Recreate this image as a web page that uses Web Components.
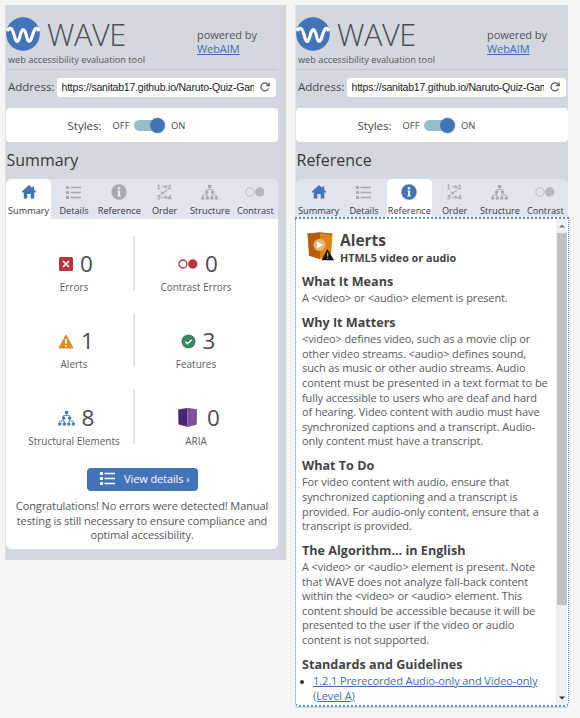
<!DOCTYPE html>
<html lang="en">
<head>
<meta charset="utf-8">
<title>WAVE</title>
<style>
html,body{margin:0;height:718px;overflow:hidden;background:#f5f5f5}
body{font-family:"Open Sans","Noto Sans",sans-serif;color:#454548}
main{display:flex;align-items:flex-start;gap:10px;padding:5px 0 0 6px;width:574px;box-sizing:border-box}
</style>
</head>
<body>
<main>
<wave-panel heading="Summary" tab="0" style="--w:280px;--h:555px">
<wave-summary>
<wave-count icon="error" n="0" label="Errors"></wave-count>
<wave-count icon="contrast" n="0" label="Contrast Errors"></wave-count>
<wave-count icon="alert" n="1" label="Alerts"></wave-count>
<wave-count icon="feature" n="3" label="Features"></wave-count>
<wave-count icon="structure" n="8" label="Structural Elements"></wave-count>
<wave-count icon="aria" n="0" label="ARIA"></wave-count>
</wave-summary>
</wave-panel>
<wave-panel heading="Reference" tab="2" style="--w:272px;--h:703px">
<wave-reference>
<wave-section heading="What It Means">A &lt;video&gt; or &lt;audio&gt; element is present.</wave-section>
<wave-section heading="Why It Matters">&lt;video&gt; defines video, such as a movie clip or<br>other video streams. &lt;audio&gt; defines sound,<br>such as music or other audio streams. Audio<br>content must be presented in a text format to be<br>fully accessible to users who are deaf and hard<br>of hearing. Video content with audio must have<br>synchronized captions and a transcript. Audio-<br>only content must have a transcript.</wave-section>
<wave-section heading="What To Do">For video content with audio, ensure that<br>synchronized captioning and a transcript is<br>provided. For audio-only content, ensure that a<br>transcript is provided.</wave-section>
<wave-section heading="The Algorithm... in English">A &lt;video&gt; or &lt;audio&gt; element is present. Note<br>that WAVE does not analyze fall-back content<br>within the &lt;video&gt; or &lt;audio&gt; element. This<br>content should be accessible because it will be<br>presented to the user if the video or audio<br>content is not supported.</wave-section>
<wave-section heading="Standards and Guidelines"><wave-guideline>1.2.1 Prerecorded Audio-only and Video-only<br>(Level A)</wave-guideline></wave-section>
</wave-reference>
</wave-panel>
</main>
<script>
const ICONS = {
  home:`<svg width="16" height="14" viewBox="0 0 16 14"><path fill="#4474b8" d="M8 0 .6 6.700l.8 1L2.700 7v6.500h3.600V9h3.400v4.500h3.600V7l1.300.7.8-1-2.200-2V1.500h-1.900v1.400z"/></svg>`,
  list:`<svg width="15" height="13" viewBox="0 0 15 13"><g fill="currentColor"><rect width="3" height="3" rx=".5"/><rect y="5" width="3" height="3" rx=".5"/><rect y="10" width="3" height="3" rx=".5"/><path d="M4.500.7H15v1.600H4.500zM4.500 5.700H15v1.600H4.500zM4.500 10.700H15v1.600H4.500z"/></g></svg>`,
  info:`<svg width="16" height="16" viewBox="0 0 16 16"><circle cx="8" cy="8" r="7.700" fill="currentColor"/><circle cx="8" cy="4.300" r="1.200" fill="#edf0f6"/><path d="M6.400 6.500h2.700v5h.8v1H6.300v-1H7v-4h-.6z" fill="#edf0f6"/></svg>`,
  order:`<svg width="15" height="16" viewBox="0 0 15 16"><g fill="none" stroke="currentColor" stroke-width="1.100"><path d="M.5 1.800 1.700.9v3.800M.3 4.700h2.900M5 2.800h4.700M8.200 1.300 9.800 2.800 8.200 4.300M11 1.600Q13.500.1 13.500 2L11.200 4.700h3M10 6.300 4.700 9.600M4.500 7.400v2.400h2.600M.4 11.500h2.500L1.500 12.800q1.800 0 1.500 1.300T.3 14.800M5 13.200h4.700M8.200 11.700l1.600 1.500-1.600 1.500M13.300 15.500v-4.200L11 14.200h3.600"/></g></svg>`,
  structure:`<svg width="17" height="15" viewBox="0 0 17 15"><g fill="currentColor"><path d="M7 0h3.200v3H7zM4 5.700h3.200v2.800H4zM10 5.700h3.200v2.800H10zM.3 11.700h3v2.700h-3zM4.900 11.700h3v2.700h-3zM9.300 11.700h3v2.700h-3zM13.800 11.700h3v2.700h-3z"/></g><path d="M8.600 3v1.500M5.500 6V4.500h6.200V6M5.500 8.500V10M1.800 12v-2h4.600v2M11.700 8.500V10M10.800 12v-2h4.500v2" fill="none" stroke="currentColor" stroke-width=".8"/></svg>`,
  duo:`<svg width="20" height="10" viewBox="0 0 20 10" opacity=".75"><circle cx="5" cy="5" r="4.100" fill="none" stroke="currentColor" stroke-width=".9"/><circle cx="14.800" cy="5" r="4.700" fill="currentColor"/></svg>`,
  error:`<svg width="14" height="14" viewBox="0 0 14 14"><rect width="14" height="14" rx="1.500" fill="#b9343c"/><path d="m4 4 6 6m0-6-6 6" stroke="#fff" stroke-width="1.600"/></svg>`,
  contrast:`<svg width="20" height="10" viewBox="0 0 20 10"><circle cx="5" cy="5" r="4" fill="none" stroke="#b9343c" stroke-width="1.300"/><circle cx="14.800" cy="5" r="4.700" fill="#b9343c"/></svg>`,
  alert:`<svg width="16" height="15" viewBox="0 0 16 15"><path d="M8 1 15 14H1z" fill="#dc8a22" stroke="#dc8a22" stroke-linejoin="round"/><path d="M8 5v4.500M8 11v1.800" stroke="#fff" stroke-width="1.700"/></svg>`,
  feature:`<svg width="15" height="15" viewBox="0 0 15 15"><circle cx="7.500" cy="7.500" r="7" fill="#3c8564"/><path d="m4.300 7.700 2.300 2.100 4.100-4" fill="none" stroke="#fff" stroke-width="1.500"/></svg>`,
  aria:`<svg width="19" height="19" viewBox="0 0 19 19" style="margin:-1px 3px 0 2px"><path d="M.5 1.700 9.500.3V18.600L.8 16.300z" fill="#49246f"/><path d="M9.500.3l9 1.400-.3 14.600-8.700 2.300z" fill="#8052a2"/><path d="m.5 1.700 9-1.400 9 1.400-.3 14.600-8.700 2.300-8.700-2.300z" fill="none" stroke="#55307e" stroke-width=".7"/></svg>`
};
function define(name, render){
  customElements.define(name, class extends HTMLElement{
    connectedCallback(){
      if(!this.shadowRoot) this.attachShadow({mode:'open'}).innerHTML = render(this);
    }
  });
}
define('wave-header', () => `<style>
:host{display:grid;grid-template-columns:190px 1fr;height:65px;border-bottom:1px solid #bfc4cd;width:272px;box-sizing:border-box}
.brand{display:flex;gap:7px;padding-top:12px;height:34px}
svg{display:block}
.name{font-weight:300;font-size:30.700px;line-height:34px;letter-spacing:-.4px;color:#4c4c52}
.tag{font-size:9.200px;line-height:14px;margin:1.500px 0 0 2px;white-space:nowrap;color:#55565c}
.by{font-size:11px;letter-spacing:-.07px;line-height:14.600px;padding:22.500px 0 0 1px;color:#505157}
a{color:#3a6bbb;text-decoration:underline}
</style>
<div><div class="brand"><svg width="34" height="34" viewBox="0 0 34 34"><circle cx="17" cy="17" r="16.800" fill="#4474b8"/><path d="M1 14C4.500 8.500 6.500 12 8.500 19.500c2 7 4 6 5.500-.5 2-8.500 4.500-8.500 6.500 0 1.500 6.500 3.500 7.500 5.500.5C28.500 12 30 8.500 33 14" fill="none" stroke="#fff" stroke-width="3.200"/></svg><span class="name">WAVE</span></div><div class="tag">web accessibility evaluation tool</div></div>
<div class="by">powered by<br><a>WebAIM</a></div>`);
define('wave-address', () => `<style>
:host{display:flex;align-items:center;height:18.500px;margin-top:8px;padding-left:2px;font-size:11.500px}
.l{width:49px;white-space:nowrap;margin-top:-1.500px}
.f{display:flex;align-items:center;width:219px;height:18.500px;background:#fff;border-radius:3px;box-sizing:border-box;padding:0 6px 0 4.500px;gap:6px}
.u{width:194px;overflow:hidden;white-space:nowrap;font:10.500px/16px "Liberation Sans",Arial,sans-serif;letter-spacing:-.2px;color:#222}
</style><span class="l">Address:</span><div class="f"><div class="u">https://sanitab17.github.io/Naruto-Quiz-Game/</div><svg width="10" height="10" viewBox="0 0 10 10"><path d="M8.600 6.500A4 4 0 1 1 8 2.300L9 3.500M9.200.5v3.300H6" fill="none" stroke="#4b4b4b" stroke-width="1.100"/></svg></div>`);
define('wave-styles', () => `<style>
:host{display:flex;align-items:center;width:272px;height:34px;margin-top:11.500px;background:#fff;border-radius:4px;box-sizing:border-box;padding-left:61.500px;font-size:11.500px}
.off{width:21.500px;margin-left:11px;font-size:9.400px}.l{width:34px}
.on{margin-left:8px;font-size:9.400px}
.t{width:29px;height:11px;margin-top:1px;border-radius:6px;background:#93c0c6;display:flex;align-items:center;justify-content:flex-end}
.k{width:15.500px;height:15.500px;flex:none;border-radius:50%;background:#4474b8;margin-right:-2px;box-shadow:0 0 2px #aab}
</style><span class="l">Styles:</span><span class="off">OFF</span><div class="t"><div class="k"></div></div><span class="on">ON</span>`);
define('wave-tab', e => `<style>
:host{display:flex;flex-direction:column;align-items:center;flex:1 1 0;min-width:0;height:40px;border-radius:5px 5px 0 0;color:#a7a9b0;box-sizing:border-box;padding-top:4.500px}
:host([active]){background:#fff;color:#4474b8}
.i{height:17px;display:flex;align-items:center}
.l{font-size:9.200px;line-height:14px;color:#38383c;margin-top:3px;white-space:nowrap}
</style><div class="i">${ICONS[e.getAttribute('icon')]}</div><span class="l"><slot></slot></span>`);
define('wave-panel', e => `<style>
:host{display:block;width:var(--w);height:var(--h);background:#d3d8df;flex:none;box-shadow:-1px 0 #dfe2e7}
h1{font-size:16px;line-height:22px;font-weight:400;margin:7px 0 8px .5px;color:#38383c}
nav{display:flex;width:272px;height:39.500px;background:#e0e4ec;border-radius:5px 5px 0 0;overflow:hidden}
</style><wave-header></wave-header><wave-address></wave-address><wave-styles></wave-styles>
<h1>${e.getAttribute('heading')}</h1>
<nav>${[['home','Summary'],['list','Details'],['info','Reference'],['order','Order'],['structure','Structure'],['duo','Contrast']].map((t,i)=>`<wave-tab icon="${t[0]}"${i==e.getAttribute('tab')?' active':''}>${t[1]}</wave-tab>`).join('')}</nav><slot></slot>`);
define('wave-summary', () => `<style>
:host{display:block;width:272px;height:330.500px;background:#fff;border-radius:0 0 5px 5px;box-sizing:border-box;padding-top:17.500px}
.g{display:grid;grid-template-columns:122px 122px;gap:23px 0;padding-left:7px;height:208px}
.b{display:flex;align-items:center;gap:9px;width:111.500px;height:23.500px;border-radius:4px;background:#4474b8;color:#fff;margin:23.500px 0 0 80.500px;padding:0 0 1px 13.500px;box-sizing:border-box;font-size:11px;letter-spacing:-.1px;white-space:nowrap}
svg{display:block}
p{margin:8.300px 0 0;font-size:11px;letter-spacing:-.1px;line-height:14.600px;text-align:center;color:#56575c;white-space:nowrap}
</style><div class="g"><slot></slot></div><div class="b">${ICONS.list}<span>View details ›</span></div>
<p>Congratulations! No errors were detected! Manual<br>testing is still necessary to ensure compliance and<br>optimal accessibility.</p>`);
define('wave-count', e => `<style>
:host{display:flex;flex-direction:column;align-items:center;height:54px;box-sizing:border-box;padding-top:12px}
:host(:nth-child(odd)){border-right:2px solid #e5e5e7;padding-left:2px}
.n{display:flex;align-items:center;gap:7px;font-size:22.500px;line-height:32px;height:32px;color:#4a4a4e;padding-left:4px}
.l{font-size:10px;line-height:14px;white-space:nowrap;color:#5b5c60}
svg{display:block;color:#4878aa}
</style><div class="n">${ICONS[e.getAttribute('icon')]}<span>${e.getAttribute('n')}</span></div><span class="l">${e.getAttribute('label')}</span>`);
define('wave-section', e => `<style>
:host{display:block;margin-bottom:8.400px;white-space:nowrap}
h2{font-size:12.600px;line-height:18px;margin:0;color:#434347}
div{font-size:11px;letter-spacing:-.1px;line-height:14.600px;color:#595a5f}
</style><h2>${e.getAttribute('heading')}</h2><div><slot></slot></div>`);
define('wave-guideline', () => `<style>
:host{display:flex;gap:9px;margin-left:-2px}
.d{width:4px;height:4px;border-radius:50%;background:#333;margin-top:5.500px;flex:none}
a{color:#3a6fb8;text-decoration:underline}
</style><span class="d"></span><a><slot></slot></a>`);
define('wave-scrollbar', () => `<style>
:host{display:flex;flex-direction:column;align-items:center;width:11px;background:#f0f0f1}
.u,.v{height:14px;display:flex;align-items:center}
.t{width:10px;height:372px;background:#c1c1c1}
.v{margin-top:auto}
</style><div class="u"><svg width="6" height="4"><path d="M0 3.500h6L3 .5z" fill="#777"/></svg></div><div class="t"></div><div class="v"><svg width="6" height="4"><path d="M0 .5h6L3 3.500z" fill="#333"/></svg></div>`);
define('wave-reference', () => `<style>
:host{display:flex;width:274px;height:490px;margin:-2px 0 0 -1px;background:#fff;border:dotted #5c8cc6;border-width:2px 1px;border-radius:0 0 5px 5px;box-sizing:border-box;position:relative}
.c{width:260px;flex:none;padding:13px 0 0 6px;box-sizing:border-box}
.top{display:flex;height:41.700px;padding-left:4px;gap:4px}
.t{white-space:nowrap;font-weight:700;color:#434347}
.a{font-size:15.500px;line-height:17px}.h{font-size:10.750px;line-height:18px}
svg{display:block}
</style><div class="c"><div class="top"><svg width="30" height="32" viewBox="0 0 30 32"><path d="M1.500 2 14 .8v26.500L3 23.700z" fill="#b85e09"/><path d="m14 .8 12.500 1.200-1.500 21.700-11 3.600z" fill="#dc8515"/><path d="M1.500 2 14 .8 26.500 2" fill="none" stroke="#9d560e"/><circle cx="13.500" cy="13" r="6" fill="#e3b47c"/><path d="m11 9.500 6 3.500-6 3.500z" fill="#fff"/><path d="M21.500 17 28 28.300H15.500z" fill="#111"/><path d="M21.700 20.500v4M21.700 25.500v1.300" stroke="#d6b77e" stroke-width="1.200"/></svg><div class="t"><div class="a">Alerts</div><div class="h">HTML5 video or audio</div></div></div><slot></slot></div><wave-scrollbar></wave-scrollbar>`);
</script>
</body>
</html>
